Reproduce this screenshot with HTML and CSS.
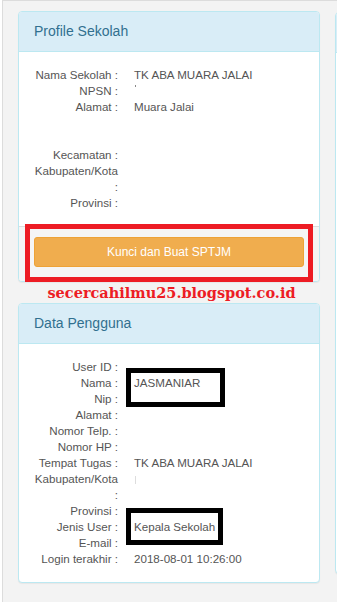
FILE: index.html
```html
<!DOCTYPE html>
<html>
<head>
<meta charset="utf-8">
<link rel="stylesheet" href="styles.css">
</head>
<body>
<div class="page">
  <div class="row">
    <div class="col">
      <div class="panel">
        <div class="panel-heading">Profile Sekolah</div>
        <div class="panel-body">
          <div class="info">
            <div class="lbl">Nama Sekolah :</div><div class="val">TK ABA MUARA JALAI</div>
            <div class="lbl">NPSN :</div><div class="val"><span class="dot"></span></div>
            <div class="lbl">Alamat :</div><div class="val tall">Muara Jalai</div>
            <div class="lbl">Kecamatan :</div><div class="val"></div>
            <div class="lbl">Kabupaten/Kota :</div><div class="val"></div>
            <div class="lbl">Provinsi :</div><div class="val"></div>
          </div>
        </div>
        <div class="panel-footer">
          <button class="btn-warning" type="button">Kunci dan Buat SPTJM</button>
        </div>
        <div class="mark-red"></div>
      </div>
      <div class="watermark">secercahilmu25.blogspot.co.id</div>
      <div class="panel">
        <div class="panel-heading">Data Pengguna</div>
        <div class="panel-body">
          <div class="info">
            <div class="lbl">User ID :</div><div class="val"></div>
            <div class="lbl">Nama :</div><div class="val">JASMANIAR</div>
            <div class="lbl">Nip :</div><div class="val"></div>
            <div class="lbl">Alamat :</div><div class="val"></div>
            <div class="lbl">Nomor Telp. :</div><div class="val"></div>
            <div class="lbl">Nomor HP :</div><div class="val"></div>
            <div class="lbl">Tempat Tugas :</div><div class="val">TK ABA MUARA JALAI</div>
            <div class="lbl">Kabupaten/Kota :</div><div class="val"><span class="bar"></span></div>
            <div class="lbl">Provinsi :</div><div class="val"></div>
            <div class="lbl">Jenis User :</div><div class="val">Kepala Sekolah</div>
            <div class="lbl">E-mail :</div><div class="val"></div>
            <div class="lbl">Login terakhir :</div><div class="val">2018-08-01 10:26:00</div>
          </div>
        </div>
        <div class="mark-black mark-nama"></div>
        <div class="mark-black mark-jenis"></div>
      </div>
    </div>
    <div class="col side">
      <div class="panel side-panel">
        <div class="panel-heading">&nbsp;</div>
      </div>
    </div>
  </div>
</div>
</body>
</html>
```

FILE: styles.css
```css
html, body {
  margin: 0;
  padding: 0;
  background: #ffffff;
}
body {
  font-family: "Liberation Sans", Arial, sans-serif;
  color: #333;
}
.page {
  margin-left: 2px;
  height: 602px;
  border-left: 1px solid #dcdcdc;
  border-top: 1px solid #dcdcdc;
  background: #f3f3f3;
  padding: 10px 0 0 15px;
  box-sizing: border-box;
  overflow: hidden;
}
.row {
  display: flex;
  gap: 15px;
  width: 700px;
}
.col {
  width: 302px;
  flex-shrink: 0;
  display: flex;
  flex-direction: column;
}
.panel {
  position: relative;
  background: #fff;
  border: 1px solid #bce8f1;
  border-radius: 4px;
  box-shadow: 0 1px 1px rgba(0,0,0,0.05);
}
.panel-heading {
  background: #d9edf7;
  color: #31708f;
  font-size: 14px;
  line-height: 19px;
  padding: 10px 15px;
  border-bottom: 1px solid #bce8f1;
  border-radius: 3px 3px 0 0;
}
.panel-body {
  padding: 15px;
}
.info {
  display: grid;
  grid-template-columns: 84px 1fr;
  column-gap: 16px;
  font-size: 11.6px;
  line-height: 16px;
  color: #555;
}
.lbl {
  text-align: right;
}
.val.tall {
  min-height: 48px;
}
.dot {
  display: inline-block;
  width: 1px;
  height: 2px;
  background: #888;
  vertical-align: 8px;
  margin-left: 1px;
}
.bar {
  display: inline-block;
  width: 1px;
  height: 8px;
  background: #ddd;
  vertical-align: -1px;
  margin-left: 1px;
}
.panel-footer {
  background: #f5f5f5;
  border-top: 1px solid #ddd;
  padding: 10px 15px 14px;
  border-radius: 0 0 3px 3px;
}
.btn-warning {
  display: block;
  width: 100%;
  height: 30px;
  background: #f0ad4e;
  border: 1px solid #eea236;
  border-radius: 3px;
  color: #fff;
  font-family: "Liberation Sans", Arial, sans-serif;
  font-size: 12px;
  padding: 0;
}
.mark-red {
  position: absolute;
  left: 6px;
  right: 6px;
  bottom: -1px;
  height: 58px;
  border: 5px solid #ed1c24;
  box-sizing: border-box;
}
.watermark {
  height: 21px;
  line-height: 21px;
  text-align: center;
  padding-left: 5px;
  font-family: "DejaVu Serif", "Liberation Serif", serif;
  font-weight: bold;
  font-size: 14.5px;
  color: #ed1c24;
  white-space: nowrap;
}
.mark-black {
  position: absolute;
  border: 5px solid #000;
  box-sizing: border-box;
}
.mark-nama {
  left: 107px;
  top: 64px;
  width: 99px;
  height: 39px;
}
.mark-jenis {
  left: 107px;
  top: 204px;
  width: 97px;
  height: 37px;
}
.side {
  width: 300px;
}
.side-panel {
  margin-top: 1px;
  height: 562px;
  box-sizing: border-box;
}
```
